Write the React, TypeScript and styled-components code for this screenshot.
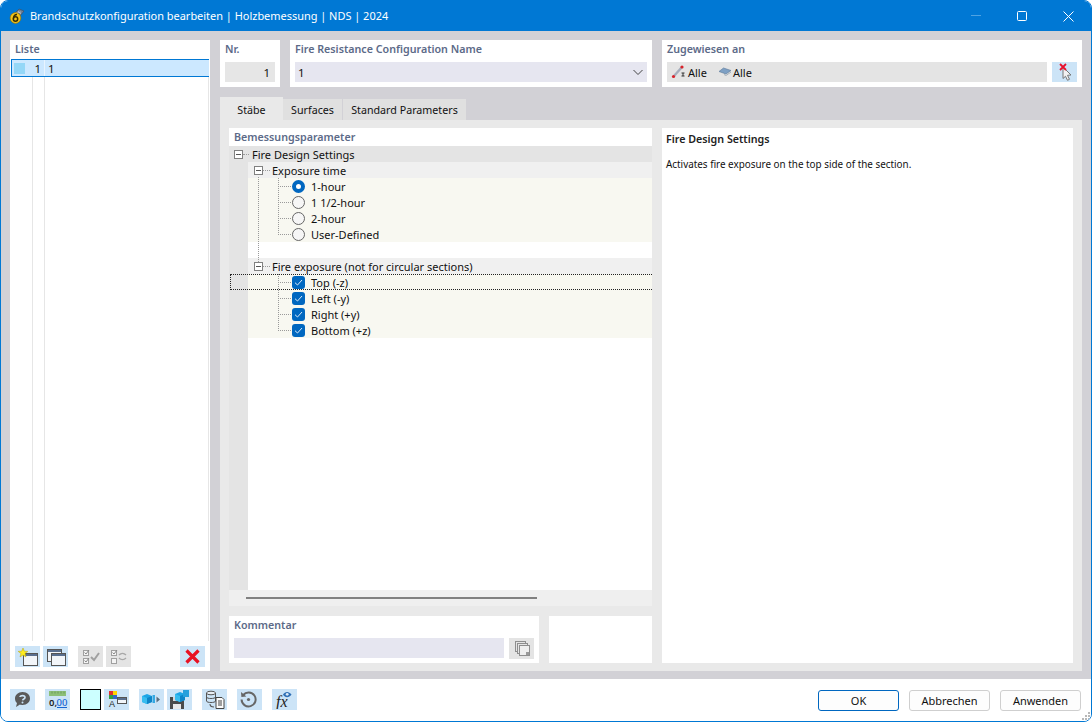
import React from "react";
import styled, { createGlobalStyle } from "styled-components";

const Global = createGlobalStyle`
  html, body { margin: 0; padding: 0; background: #fff; }
  #root { width: 1092px; height: 722px; }
  * { box-sizing: border-box; }
`;

const Win = styled.div`
  width: 1092px; height: 722px;
  border: 1px solid #0078d4; border-radius: 8px; overflow: hidden;
  display: flex; flex-direction: column; background: #fff;
  font: 11px/16px "Noto Sans", sans-serif; color: #111;
`;
const TitleBar = styled.div`
  height: 30px; flex: none; background: #0078d4; color: #fff;
  display: flex; align-items: center; padding-left: 8px;
`;
const TitleText = styled.span`flex: 1; font-size: 10.95px; margin-left: 5px;`;
const WinBtn = styled.div<{ $w?: number }>`
  width: ${p => p.$w ?? 46}px; height: 30px; flex: none; display: flex; align-items: center; justify-content: center;
`;
const Body = styled.div`
  flex: 1; min-height: 0; background: #d2d1d6; padding: 9px 9px 8px;
  display: grid; grid-template-columns: 200px 862px; gap: 10px;
`;
const ListPanel = styled.div`background: #fff; display: flex; flex-direction: column;`;
const CardLabel = styled.div`
  height: 22px; padding: 0 5px; color: #5c6a88; font-weight: 600; font-size: 10.7px; line-height: 18px;
`;
const ListLabel = styled(CardLabel)`height: 19px;`;
const ListArea = styled.div`
  flex: 1; margin: 0 1px;
  background:
    linear-gradient(#e6e6e6, #e6e6e6) 21px 0 / 1px 100% no-repeat,
    linear-gradient(#e6e6e6, #e6e6e6) 33px 0 / 1px 100% no-repeat,
    linear-gradient(#e6e6e6, #e6e6e6) 197px 0 / 1px 100% no-repeat;
`;
const ListRow = styled.div`
  height: 18px; background: #cce8ff; border: 1px solid #0078d4; border-right: 0;
  display: flex; align-items: center; font-size: 11.5px;
`;
const Swatch = styled.span`width: 11px; height: 11px; margin: 0 7px 0 2px; background: #94d7f7;`;
const CellNum = styled.span`
  width: 13px; padding: 1px 3px 0 0; text-align: right; border-right: 1px solid #e8f4ff; line-height: 15px;
`;
const CellName = styled.span`padding: 1px 0 0 3px; line-height: 15px;`;
const ListTools = styled.div`height: 30px; padding: 5px 5px 4px; display: flex; align-items: flex-start;`;
const IconBtn = styled.div<{ $ml?: number; $off?: boolean; $h?: number }>`
  width: 25px; height: ${p => p.$h ?? 21}px; flex: none; margin-left: ${p => p.$ml ?? 0}px;
  background: ${p => (p.$off ? "#e4e4e4" : "#cce4f7")};
  display: flex; align-items: center; justify-content: center;
`;

const RightCol = styled.div`display: flex; flex-direction: column; min-height: 0;`;
const TopRow = styled.div`display: flex; gap: 10px; height: 47px; flex: none;`;
const Card = styled.div<{ $w: number }>`width: ${p => p.$w}px; background: #fff; flex: none;`;
const FieldBox = styled.div<{ $bg: string }>`
  height: 20px; margin: 0 5px; background: ${p => p.$bg}; display: flex; align-items: center;
  font-size: 11.5px; padding: 0 3px;
`;
const FieldText = styled.span`margin-top: 2px; line-height: 16px;`;
const NrBox = styled(FieldBox)`justify-content: flex-end; padding-right: 5px;`;
const NameBox = styled(FieldBox)`justify-content: space-between; padding-right: 3px;`;
const AssignRow = styled.div`display: flex; gap: 5px; margin: 0 5px;`;
const AssignBox = styled(FieldBox)`flex: 1; margin: 0; padding-left: 4px; gap: 1px; font-size: 11px;`;
const AssignGap = styled.span`width: 9px;`;

const Tabs = styled.div`display: flex; align-items: flex-end; height: 23px; margin-top: 10px; flex: none;`;
const Tab = styled.div<{ $w: number; $on?: boolean }>`
  width: ${p => p.$w}px; height: ${p => (p.$on ? 23 : 21)}px; flex: none;
  background: ${p => (p.$on ? "#e9e9e9" : "#e0e0e0")};
  margin-right: ${p => (p.$on ? 0 : 1)}px;
  text-align: center; line-height: ${p => (p.$on ? 26 : 22)}px; font-size: 10.7px;
`;
const TabPanel = styled.div`
  flex: 1; min-height: 0; background: #e9e9e9; padding: 8px 9px;
  display: grid; grid-template-columns: 423px 411px; gap: 10px;
`;
const LeftStack = styled.div`display: flex; flex-direction: column; gap: 10px; min-height: 0;`;
const TreeCard = styled.div`flex: 1; min-height: 0; background: #fff; display: flex; flex-direction: column;`;
const TreeHead = styled(CardLabel)`height: 18px;`;
const Tree = styled.div`
  flex: 1; min-height: 0; border-left: 19px solid #e4e4e4; position: relative;
`;
const Row = styled.div<{ $bg?: string; $pad: number; $root?: boolean }>`
  height: 16px; display: flex; align-items: center; position: relative;
  background: ${p => p.$bg ?? "transparent"};
  padding-left: ${p => p.$pad}px;
  margin-left: ${p => (p.$root ? -19 : 0)}px;
  font-size: 11px;
`;
const RowText = styled.span`margin-top: 2px; line-height: 16px;`;
const Expander = styled.span`
  width: 9px; height: 9px; border: 1px solid #808080; background: #fff; flex: none; position: relative;
  &::after { content: ""; position: absolute; left: 1px; right: 1px; top: 3px; height: 1px; background: #555; }
`;
const Dash = styled.span<{ $w: number; $mr: number }>`
  width: ${p => p.$w}px; margin-right: ${p => p.$mr}px; flex: none; border-top: 1px dotted #9a9a9a;
`;
const Guide = styled.span<{ $x: number; $y: number; $h: number }>`
  position: absolute; left: ${p => p.$x}px; top: ${p => p.$y}px; height: ${p => p.$h}px;
  border-left: 1px dotted #9a9a9a; z-index: 1;
`;
const Radio = styled.span<{ $on?: boolean }>`
  width: 13px; height: 13px; border-radius: 50%; flex: none; margin-right: 6px; background: #f6f6f6;
  border: ${p => (p.$on ? "4px solid #0067c0" : "1px solid #666")};
  ${p => (p.$on ? "background: #fff;" : "")}
`;
const Check = styled.span`
  width: 13px; height: 13px; border-radius: 3px; flex: none; margin-right: 6px; background: #0067c0;
  display: flex; align-items: center; justify-content: center;
`;
const FocusBox = styled.span`
  position: absolute; left: -18px; right: 0; top: 0; bottom: 0; border: 1px dotted #222; border-right: 0;
  pointer-events: none;
`;
const ScrollBar = styled.div`height: 16px; flex: none; background: #efefef; padding: 7px 0 0 17px;`;
const Thumb = styled.div`width: 291px; height: 2px; background: #808080;`;
const BottomRow = styled.div`display: flex; gap: 10px; height: 47px; flex: none;`;
const CommentRow = styled.div`display: flex; gap: 5px; margin: 0 5px;`;
const CommentBox = styled(FieldBox)`flex: 1; margin: 0;`;
const Help = styled.div`background: #fff; padding: 3px 4px;`;
const HelpTitle = styled.div`font-weight: 600; font-size: 10.7px; height: 16px; margin-bottom: 9px; color: #222;`;
const HelpText = styled.div`font-size: 9.9px; height: 16px;`;

const Footer = styled.div`
  height: 42px; flex: none; background: #fff; padding: 10px 10px 0 9px; display: flex; align-items: flex-start; position: relative;
`;
const ColorCell = styled.div`
  width: 21px; height: 21px; flex: none; margin: 0 3px 0 10px; background: #ccffff; border: 1px solid #000;
`;
const Spacer = styled.div`flex: 1;`;
const DlgBtn = styled.div<{ $def?: boolean }>`
  width: 81px; height: 21px; margin: 1px 0 0 10px; flex: none; border-radius: 3px; background: #fdfdfd;
  border: 1px solid ${p => (p.$def ? "#0067c0" : "#cfcfcf")};
  text-align: center; line-height: 19px; font-size: 11px;
`;
const Grip = styled.svg`position: absolute; right: 0; bottom: 0;`;

const I = ({ children, w = 21, h = 19 }: { children: React.ReactNode; w?: number; h?: number }) => (
  <svg width={w} height={h} viewBox={`0 0 ${w} ${h}`} fill="none">{children}</svg>
);

const Logo = () => (
  <svg width="16" height="16" viewBox="0 0 16 16" style={{ flex: "none" }}>
    <path d="M5 6 L10 1 L15 3 L11 8 Z" fill="#6f7f94" stroke="#3d4a5c" strokeWidth=".6" />
    <path d="M7 5 L12 4 M9 3 L12 6" stroke="#c7d2df" strokeWidth=".6" />
    <circle cx="6.5" cy="10" r="5.4" fill="#f5c518" stroke="#8f6b00" strokeWidth=".6" />
    <circle cx="6.5" cy="11" r="2.2" fill="none" stroke="#3a2f00" strokeWidth="1.5" />
    <path d="M4.5 10.5 C4.6 8 6 6.6 8 6.5" fill="none" stroke="#3a2f00" strokeWidth="1.5" />
  </svg>
);
const MemberIcon = () => (
  <svg width="16" height="16" viewBox="0 0 16 16" style={{ flex: "none" }}>
    <path d="M3 12 L11 3" stroke="#a4adbc" strokeWidth="2.4" />
    <circle cx="2.5" cy="12.5" r="1.6" fill="#d8232a" />
    <circle cx="11" cy="3" r="1.6" fill="#d8232a" />
    <path d="M10.5 9 H13.5 M12 9 V12 M10.5 12 H13.5" stroke="#333" strokeWidth="1" />
  </svg>
);
const SurfaceIcon = () => (
  <svg width="14" height="14" viewBox="0 0 14 14" style={{ flex: "none" }}>
    <path d="M1 6.5 L5.5 3 L13 5.5 L8 9 Z" fill="#7ea0c4" stroke="#5a7898" strokeWidth=".6" />
    <path d="M6 9.5 L8 10.5 L13 7" stroke="#a8b0b8" strokeWidth="1" fill="none" />
  </svg>
);
const CursorX = () => (
  <I w={25} h={20}>
    <path d="M11 5 V16.5 L13.5 14.3 L15.5 18.3 L17.5 17.3 L15.5 13.3 L19 13 Z" fill="#f2f2f2" stroke="#777" strokeWidth="1" />
    <path d="M8 2 L14 8 M14 2 L8 8" stroke="#e8112d" strokeWidth="1.8" />
  </I>
);
const Win1 = ({ x, y, w = 14, h = 12 }: { x: number; y: number; w?: number; h?: number }) => (
  <g>
    <rect x={x + 0.5} y={y + 0.5} width={w} height={h} fill="#f2f5f9" stroke="#555" />
    <rect x={x + 1} y={y + 1} width={w - 1} height="2" fill="#5a6f8f" />
  </g>
);
const NewIcon = () => (
  <I>
    <Win1 x={6} y={6} />
    <path d="M6 1 L7.3 4.2 L10.8 4.4 L8 6.5 L9 10 L6 8 L3 10 L4 6.5 L1.2 4.4 L4.7 4.2 Z" fill="#ffec1f" stroke="#b7a000" strokeWidth=".5" />
  </I>
);
const CopyIcon = () => (
  <I>
    <Win1 x={2} y={2} />
    <Win1 x={6} y={6} />
  </I>
);
const Tick = ({ x, y, on }: { x: number; y: number; on?: boolean }) => (
  <g>
    <rect x={x + 0.5} y={y + 0.5} width="5" height="5" stroke="#a0a0a0" fill="#f4f4f4" />
    {on && <path d={`M${x + 1.5} ${y + 2.5} l1.5 1.5 l3 -4`} stroke="#8a8a8a" strokeWidth="1" />}
  </g>
);
const CheckAllIcon = () => (
  <I>
    <Tick x={3} y={3} on />
    <Tick x={3} y={11} on />
    <path d="M11 10 L14 13 L19 6" stroke="#a0a0a0" strokeWidth="2" />
  </I>
);
const CheckSwapIcon = () => (
  <I>
    <Tick x={3} y={3} on />
    <Tick x={3} y={11} />
    <path d="M11 8 C13 6 16 6 18 8 M18 11 C16 13 13 13 11 11" stroke="#a8a8a8" strokeWidth="1.4" />
  </I>
);
const RedX = () => (
  <I>
    <path d="M4.5 3.5 L16.5 15.5 M16.5 3.5 L4.5 15.5" stroke="#e81123" strokeWidth="3.2" />
  </I>
);
const CopySmall = () => (
  <I>
    <rect x="4.5" y="2.5" width="10" height="10" stroke="#8e8e8e" fill="#e4e4e4" />
    <rect x="6.5" y="4.5" width="10" height="10" stroke="#8e8e8e" fill="#e4e4e4" />
    <rect x="8.5" y="6.5" width="10" height="10" stroke="#8e8e8e" fill="#efefef" />
    <rect x="15" y="13" width="3" height="3" fill="#9a9a9a" />
  </I>
);
const HelpIcon = () => (
  <I>
    <path d="M10.5 2 C15.5 2 18 5 18 8.5 C18 12 15 15 10.5 15 C9.5 15 8.5 15 8 14.6 L4 17 L5 13 C3.8 12 3 10.5 3 8.5 C3 5 6 2 10.5 2 Z" fill="#5a5a5a" />
    <path d="M8 7 C8 5.3 13 5 13 7.4 C13 9 10.8 9 10.6 10.4" stroke="#cce4f7" strokeWidth="1.6" />
    <circle cx="10.5" cy="12.5" r="1" fill="#cce4f7" />
  </I>
);
const UnitsIcon = () => (
  <I>
    <rect x="2" y="1" width="17" height="5" fill="#8cbf78" />
    <path d="M5 1.5 V3.5 M8 1.5 V3.5 M11 1.5 V3.5 M14 1.5 V3.5 M17 1.5 V3.5" stroke="#5f8a50" strokeWidth=".7" />
    <text x="2" y="15.5" fontFamily="Noto Sans, sans-serif" fontSize="9.5" fontWeight="600" fill="#222">0,</text>
    <text x="9.5" y="15.5" fontFamily="Noto Sans, sans-serif" fontSize="9.5" fontWeight="500" fill="#1464d2">00</text>
    <path d="M10 17.5 H20" stroke="#1464d2" strokeWidth="1" />
  </I>
);
const PaletteIcon = () => (
  <I>
    <rect x="3" y="1" width="4" height="4" fill="#e03030" />
    <rect x="7" y="1" width="4" height="4" fill="#ffd400" />
    <rect x="3" y="5" width="4" height="4" fill="#2f9e44" />
    <rect x="7" y="5" width="4" height="4" fill="#3565c8" />
    <text x="3" y="17" fontFamily="Liberation Sans, sans-serif" fontSize="9" fill="#222">A</text>
    <Win1 x={11} y={7} w={9} h={6} />
  </I>
);
const Boxes = ({ x = 0, y = 0 }: { x?: number; y?: number }) => (
  <g transform={`translate(${x} ${y})`}>
    <path d="M0 5 L5 3 L10 5 V11 L5 13 L0 11 Z" fill="#1ea5e6" />
    <path d="M5 7 L10 5 V11 L5 13 Z" fill="#0f85c8" />
    <path d="M0 5 L5 7 V13 L0 11 Z" fill="#39bdf0" />
  </g>
);
const ModelIcon = () => (
  <I>
    <Boxes x={1} y={1} />
    <rect x="11.5" y="5" width="2.5" height="8" fill="#35a9e3" />
    <path d="M15.5 6.5 L19 9.5 L15.5 12.5 Z" fill="#5a6e80" />
  </I>
);
const SaveIcon = () => (
  <I>
    <path d="M1 7 H12 L15 9 V19 H1 Z" fill="#4a4a4a" />
    <rect x="4" y="7" width="6" height="4" fill="#d8d8d8" />
    <rect x="4" y="14" width="8" height="5" fill="#e8e8e8" />
    <Boxes x={6} y={-1} />
    <rect x="14" y="0" width="6" height="7" fill="#28a0dc" />
  </I>
);
const DbIcon = () => (
  <I>
    <ellipse cx="7" cy="3" rx="4.5" ry="1.8" stroke="#555" fill="#e8eef4" />
    <path d="M2.5 3 V11 C2.5 13 11.5 13 11.5 11 V3 M2.5 7 C2.5 9 11.5 9 11.5 7" stroke="#555" />
    <path d="M6 14 C6 16 7 17 10 17" stroke="#555" strokeWidth="1.1" />
    <path d="M12 7.5 H18 L20 9.5 V18.5 H12 Z" fill="#fafafa" stroke="#444" />
    <path d="M14 11 H18 M14 13 H18 M14 15 H18" stroke="#444" />
  </I>
);
const ResetIcon = () => (
  <I>
    <path d="M4.2 5 A7 7 0 1 1 2.6 9.5" stroke="#666" strokeWidth="2" />
    <path d="M2 2 L2.4 7 L7.4 6.6 Z" fill="#666" />
    <circle cx="9.5" cy="9.5" r="1.6" fill="#666" />
  </I>
);
const FxIcon = () => (
  <I>
    <text x="2" y="16.5" fontFamily="Liberation Serif, serif" fontStyle="italic" fontSize="16" fill="#222">fx</text>
    <path d="M9 4.5 C11 1 15 1 17.5 4.5 C15 8 11 8 9 4.5 Z" fill="#2f6fb5" />
    <circle cx="13.2" cy="4.3" r="1.4" fill="#dbe9f7" />
  </I>
);

const Chevron = () => (
  <svg width="12" height="12" viewBox="0 0 12 12" fill="none">
    <path d="M1.5 4 L6 8.5 L10.5 4" stroke="#444" strokeWidth="1" />
  </svg>
);
const Tickmark = () => (
  <svg width="9" height="9" viewBox="0 0 9 9" fill="none">
    <path d="M1 4.7 L3.5 7 L8 2" stroke="#d8e8f8" strokeWidth="1" />
  </svg>
);

const radios = ["1-hour", "1 1/2-hour", "2-hour", "User-Defined"];
const checks = ["Top (-z)", "Left (-y)", "Right (+y)", "Bottom (+z)"];
const LEAF = "#f8f8f1";

export default function App() {
  return (
    <Win>
      <Global />
      <TitleBar>
        <Logo />
        <TitleText>Brandschutzkonfiguration bearbeiten | Holzbemessung | NDS | 2024</TitleText>
        <WinBtn $w={46}><svg width="10" height="2"><path d="M0 .5 H10" stroke="#4fa3e3" /></svg></WinBtn>
        <WinBtn><svg width="10" height="10"><rect x=".5" y=".5" width="9" height="9" rx="1" fill="none" stroke="#fff" /></svg></WinBtn>
        <WinBtn><svg width="11" height="11"><path d="M.5 .5 L10.5 10.5 M10.5 .5 L.5 10.5" stroke="#fff" /></svg></WinBtn>
      </TitleBar>
      <Body>
        <ListPanel>
          <ListLabel>Liste</ListLabel>
          <ListArea>
            <ListRow>
              <Swatch />
              <CellNum>1</CellNum>
              <CellName>1</CellName>
            </ListRow>
          </ListArea>
          <ListTools>
            <IconBtn><NewIcon /></IconBtn>
            <IconBtn $ml={3}><CopyIcon /></IconBtn>
            <IconBtn $ml={10} $off><CheckAllIcon /></IconBtn>
            <IconBtn $ml={3} $off><CheckSwapIcon /></IconBtn>
            <IconBtn $ml={49}><RedX /></IconBtn>
          </ListTools>
        </ListPanel>
        <RightCol>
          <TopRow>
            <Card $w={60}>
              <CardLabel>Nr.</CardLabel>
              <NrBox $bg="#e6e6e6"><FieldText>1</FieldText></NrBox>
            </Card>
            <Card $w={362}>
              <CardLabel>Fire Resistance Configuration Name</CardLabel>
              <NameBox $bg="#e6e6f0"><FieldText>1</FieldText><Chevron /></NameBox>
            </Card>
            <Card $w={420}>
              <CardLabel>Zugewiesen an</CardLabel>
              <AssignRow>
                <AssignBox $bg="#e4e4e4">
                  <MemberIcon /><FieldText>Alle</FieldText><AssignGap /><SurfaceIcon /><FieldText>Alle</FieldText>
                </AssignBox>
                <IconBtn $h={20}><CursorX /></IconBtn>
              </AssignRow>
            </Card>
          </TopRow>
          <Tabs>
            <Tab $w={63} $on>Stäbe</Tab>
            <Tab $w={59}>Surfaces</Tab>
            <Tab $w={123}>Standard Parameters</Tab>
          </Tabs>
          <TabPanel>
            <LeftStack>
              <TreeCard>
                <TreeHead>Bemessungsparameter</TreeHead>
                <Tree>
                  <Row $root $bg="#e4e4e4" $pad={5}>
                    <Expander /><Dash $w={6} $mr={3} /><RowText>Fire Design Settings</RowText>
                  </Row>
                  <Row $bg="#f0f0f0" $pad={6}>
                    <Expander /><Dash $w={7} $mr={2} /><RowText>Exposure time</RowText>
                  </Row>
                  {radios.map((r, i) => (
                    <Row key={r} $bg={LEAF} $pad={30}>
                      <Dash $w={13} $mr={1} /><Radio $on={i === 0} /><RowText>{r}</RowText>
                    </Row>
                  ))}
                  <Row $pad={0} />
                  <Row $bg="#f0f0f0" $pad={6}>
                    <Expander /><Dash $w={7} $mr={2} /><RowText>Fire exposure (not for circular sections)</RowText>
                  </Row>
                  {checks.map((c, i) => (
                    <Row key={c} $bg={LEAF} $pad={30}>
                      <Dash $w={13} $mr={1} /><Check><Tickmark /></Check><RowText>{c}</RowText>
                      {i === 0 && <FocusBox />}
                    </Row>
                  ))}
                  <Guide $x={10} $y={31} $h={85} />
                  <Guide $x={30} $y={32} $h={57} />
                  <Guide $x={30} $y={128} $h={57} />
                </Tree>
                <ScrollBar><Thumb /></ScrollBar>
              </TreeCard>
              <BottomRow>
                <Card $w={310}>
                  <CardLabel>Kommentar</CardLabel>
                  <CommentRow>
                    <CommentBox $bg="#e6e6f0" />
                    <IconBtn $off><CopySmall /></IconBtn>
                  </CommentRow>
                </Card>
                <Card $w={103} />
              </BottomRow>
            </LeftStack>
            <Help>
              <HelpTitle>Fire Design Settings</HelpTitle>
              <HelpText>Activates fire exposure on the top side of the section.</HelpText>
            </Help>
          </TabPanel>
        </RightCol>
      </Body>
      <Footer>
        <IconBtn><HelpIcon /></IconBtn>
        <IconBtn $ml={10}><UnitsIcon /></IconBtn>
        <ColorCell />
        <IconBtn><PaletteIcon /></IconBtn>
        <IconBtn $ml={10}><ModelIcon /></IconBtn>
        <IconBtn $ml={3}><SaveIcon /></IconBtn>
        <IconBtn $ml={10}><DbIcon /></IconBtn>
        <IconBtn $ml={10}><ResetIcon /></IconBtn>
        <IconBtn $ml={10}><FxIcon /></IconBtn>
        <Spacer />
        <DlgBtn $def>OK</DlgBtn>
        <DlgBtn>Abbrechen</DlgBtn>
        <DlgBtn>Anwenden</DlgBtn>
        <Grip width="10" height="10" viewBox="0 0 10 10">
          <g fill="#b8b8b8">
            <rect x="7" y="1" width="2" height="2" />
            <rect x="4" y="4" width="2" height="2" />
            <rect x="7" y="4" width="2" height="2" />
            <rect x="1" y="7" width="2" height="2" />
            <rect x="4" y="7" width="2" height="2" />
            <rect x="7" y="7" width="2" height="2" />
          </g>
        </Grip>
      </Footer>
    </Win>
  );
}
